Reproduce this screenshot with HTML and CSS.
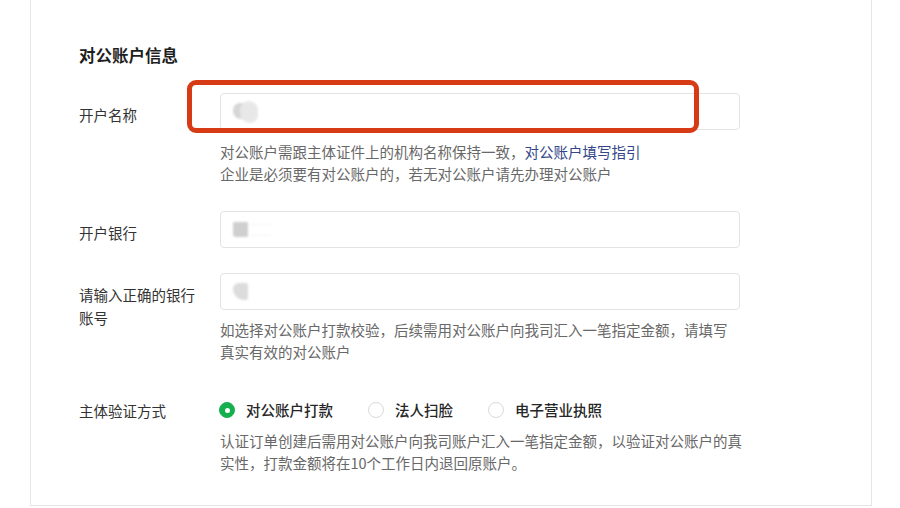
FILE: index.html
```html
<!DOCTYPE html>
<html lang="zh-CN">
<head>
<meta charset="utf-8">
<title>对公账户信息</title>
<link rel="stylesheet" href="styles.css">
</head>
<body>
<div class="card">
  <h2 class="title">对公账户信息</h2>

  <div class="row row-first">
    <div class="label">开户名称</div>
    <div class="control">
      <div class="input"><span class="blot blot-a"><i></i><b></b></span></div>
      <p class="help">对公账户需跟主体证件上的机构名称保持一致，<a class="link">对公账户填写指引</a><br>企业是必须要有对公账户的，若无对公账户请先办理对公账户</p>
    </div>
    <div class="highlight"></div>
  </div>

  <div class="row row-gap26">
    <div class="label">开户银行</div>
    <div class="control">
      <div class="input"><span class="blot blot-b"></span><span class="blot-line"></span></div>
    </div>
  </div>

  <div class="row row-gap25">
    <div class="label">请输入正确的银行账号</div>
    <div class="control">
      <div class="input"><span class="blot blot-c"></span></div>
      <p class="help help-tight">如选择对公账户打款校验，后续需用对公账户向我司汇入一笔指定金额，请填写<br>真实有效的对公账户</p>
    </div>
  </div>

  <div class="row row-radio">
    <div class="label label-radio">主体验证方式</div>
    <div class="control">
      <div class="radios">
        <label class="radio radio-on"><span class="dot"></span>对公账户打款</label>
        <label class="radio"><span class="dot"></span>法人扫脸</label>
        <label class="radio"><span class="dot"></span>电子营业执照</label>
      </div>
      <p class="help help-tight">认证订单创建后需用对公账户向我司账户汇入一笔指定金额，以验证对公账户的真<br>实性，打款金额将在10个工作日内退回原账户。</p>
    </div>
  </div>
</div>
</body>
</html>
```

FILE: styles.css
```css
* { box-sizing: border-box; }

html, body {
  margin: 0;
  padding: 0;
  background: #ffffff;
}

body {
  font-family: "Noto Sans CJK SC", "Noto Sans", sans-serif;
  color: #333333;
  width: 900px;
  height: 508px;
  overflow: hidden;
}

.card {
  margin-left: 30px;
  width: 842px;
  border-left: 1px solid #e6e6e6;
  border-right: 1px solid #e6e6e6;
  border-bottom: 1px solid #e6e6e6;
  padding: 43px 0 31px 48px;
  background: #ffffff;
}

.title {
  margin: 0;
  font-size: 16.5px;
  line-height: 24px;
  font-weight: 700;
  color: #1f1f1f;
}

.row {
  display: flex;
  align-items: flex-start;
  position: relative;
}

.row-first { margin-top: 26px; }
.row-gap26 { margin-top: 26px; }
.row-gap25 { margin-top: 25px; }
.row-radio { margin-top: 36px; }

.label {
  flex: 0 0 141px;
  padding-right: 14px;
  padding-top: 9.5px;
  font-size: 14.5px;
  line-height: 23px;
  color: #333333;
}

.label-radio { padding-top: 0; }

.control {
  flex: 0 0 520px;
  width: 520px;
}

.input {
  height: 37px;
  border: 1px solid #e3e3e3;
  border-radius: 4px;
  display: flex;
  align-items: center;
  padding-left: 12px;
  background: #ffffff;
}

.blot {
  display: inline-block;
  filter: blur(0.8px);
}

.blot-a {
  position: relative;
  width: 25px;
  height: 22px;
  margin-top: 1px;
}
.blot-a i {
  position: absolute;
  left: 0;
  top: 2px;
  width: 14px;
  height: 16px;
  border-radius: 7px 2px 6px 8px;
  background: #d6d6d6;
}
.blot-a b {
  position: absolute;
  left: 7px;
  top: 0;
  width: 18px;
  height: 22px;
  border-radius: 9px 9px 8px 10px;
  background: #e8e8e8;
}

.blot-b {
  width: 15px;
  height: 15px;
  background: #cfcfcf;
  border-radius: 1px 1px 1px 3px;
}

.blot-line {
  display: inline-block;
  width: 22px;
  height: 12px;
  margin-left: 1px;
  border-top: 1px solid #f5f5f5;
  border-bottom: 1px solid #f6f6f6;
  filter: blur(1px);
}

.blot-c {
  width: 15px;
  height: 17px;
  background: #dcdcdc;
  border-radius: 6px 2px 2px 12px;
}

.help {
  margin: 11px 0 0;
  font-size: 14.5px;
  line-height: 22px;
  color: #686868;
  white-space: nowrap;
}

.help-tight { margin-top: 9px; }

.link {
  color: #33468a;
  text-decoration: none;
}

.radios {
  display: flex;
  align-items: center;
  gap: 35px;
  height: 22px;
  margin-left: -1px;
}

.radio {
  display: flex;
  align-items: center;
  gap: 11px;
  font-size: 14.5px;
  line-height: 22px;
  font-weight: 500;
  color: #262626;
}

.dot {
  width: 16px;
  height: 16px;
  border-radius: 50%;
  border: 1px solid #d9d9d9;
  background: #ffffff;
  display: inline-flex;
  align-items: center;
  justify-content: center;
}

.radio-on .dot {
  border-color: #15b04e;
  background: #15b04e;
}

.radio-on .dot::after {
  content: "";
  width: 5px;
  height: 5px;
  border-radius: 50%;
  background: #ffffff;
}

.highlight {
  position: absolute;
  left: 108px;
  top: -13px;
  width: 512px;
  height: 53px;
  border: 5px solid #d73b16;
  border-radius: 9px;
  pointer-events: none;
}
```
